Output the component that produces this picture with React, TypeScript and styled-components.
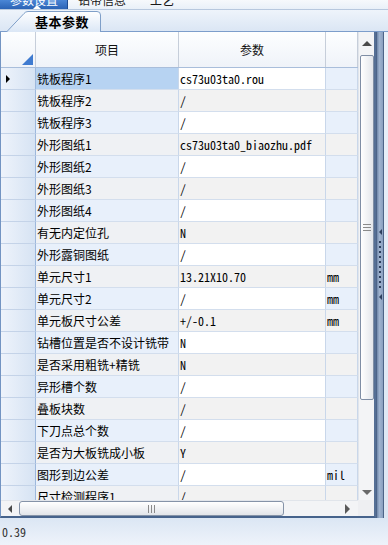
import React from "react";
import styled, { createGlobalStyle } from "styled-components";

const Global = createGlobalStyle`
  html, body { margin: 0; padding: 0; background: #ffffff; }
  body { font-family: "Noto Sans CJK SC", "Liberation Sans", sans-serif; }
  * { box-sizing: border-box; }
`;

const MONO = `"Noto Sans Mono CJK SC", "Liberation Mono", monospace`;

const Page = styled.div`
  width: 388px;
  height: 545px;
  display: flex;
  flex-direction: column;
  overflow: hidden;
  background: #e6eef8;
`;

/* ---------- top strip (cut-off outer tabs) ---------- */
const TopStrip = styled.div`
  height: 10px;
  display: flex;
  overflow: hidden;
  background: linear-gradient(#f6f9fc, #e9f0f8);
  border-bottom: 1px solid #b7c8de;
`;

const OuterTab = styled.div<{ $active?: boolean }>`
  position: relative;
  width: ${(p) => (p.$active ? "68px" : "auto")};
  padding-left: 10px;
  margin-right: ${(p) => (p.$active ? "0" : "14px")};
  background: ${(p) => (p.$active ? "linear-gradient(#4a86d6, #2b63b5)" : "transparent")};
  border-right: ${(p) => (p.$active ? "1px solid #1d4c92" : "none")};
  color: ${(p) => (p.$active ? "#ffffff" : "#1a1a1a")};
  font-size: 12px;
  line-height: 12px;
  white-space: nowrap;
`;

const OuterLabel = styled.span`
  display: block;
  margin-top: -6px;
`;

const Pointer = styled.span`
  position: absolute;
  left: 33px;
  bottom: 0;
  width: 0;
  height: 0;
  border-left: 4px solid transparent;
  border-right: 4px solid transparent;
  border-bottom: 4px solid #ffffff;
`;

/* ---------- tab bar ---------- */
const TabBar = styled.div`
  height: 22px;
  display: flex;
  align-items: flex-end;
  padding-left: 6px;
  background: linear-gradient(#eef4fb, #dbe6f4);
  border-bottom: 1px solid #7c9dcb;
`;

const Tab = styled.div`
  position: relative;
  width: 95px;
  height: 21px;
  display: flex;
  align-items: center;
  justify-content: flex-end;
  padding-right: 12px;
  font-size: 13px;
  font-weight: 700;
  color: #000;
  margin-bottom: -1px;
`;

const TabShape = styled.svg`
  position: absolute;
  inset: 0;
`;

const TabLabel = styled.span`
  position: relative;
  letter-spacing: 0.5px;
`;

/* ---------- main grid area ---------- */
const Main = styled.div`
  flex: 1;
  display: flex;
  min-height: 0;
`;

const GridFrame = styled.div`
  width: 376px;
  display: grid;
  grid-template-columns: 357px 16px;
  grid-template-rows: 1fr 16px;
  border-left: 1px solid #7394c2;
  border-right: 2px solid #556f95;
  border-bottom: 2px solid #46638c;
  background: #ffffff;
`;

const DataPane = styled.div`
  display: flex;
  flex-direction: column;
  overflow: hidden;
  min-height: 0;
`;

const COLS = "35px 143px 147px 32px";

const HeaderRow = styled.div`
  display: grid;
  grid-template-columns: ${COLS};
  height: 36px;
  flex: none;
  background: linear-gradient(#fdfeff, #eff3f9);
  border-bottom: 1px solid #a9bedb;
`;

const HeaderCell = styled.div`
  position: relative;
  display: flex;
  align-items: center;
  justify-content: center;
  border-right: 1px solid #c6ceda;
  font-size: 12px;
  color: #111;
`;

const CornerMark = styled.span`
  position: absolute;
  right: 2px;
  bottom: 2px;
  width: 0;
  height: 0;
  border-left: 11px solid transparent;
  border-bottom: 11px solid #3f7bd0;
`;

const Body = styled.div`
  flex: 1;
  overflow: hidden;
`;

const Row = styled.div`
  display: grid;
  grid-template-columns: ${COLS};
  height: 22px;
`;

const RowHead = styled.div`
  position: relative;
  display: flex;
  align-items: center;
  padding-left: 5px;
  background: linear-gradient(to right, #eef3fb, #d6e3f3);
  border-right: 1px solid #9db8dc;
  border-bottom: 1px solid #c4d3e8;
`;

const Indicator = styled.span`
  width: 0;
  height: 0;
  border-top: 4px solid transparent;
  border-bottom: 4px solid transparent;
  border-left: 4px solid #000;
`;

type Kind = "name" | "value" | "unit";

const bg = (kind: Kind, odd: boolean, selected: boolean) => {
  if (selected && kind === "name") return "#b7d3f2";
  if (odd) return kind === "name" ? "#eff1f4" : "#f2f2f2";
  return kind === "value" ? "#ffffff" : "#e8f0fb";
};

const Cell = styled.div<{ $kind: Kind; $odd: boolean; $sel?: boolean }>`
  display: flex;
  align-items: center;
  padding-left: 1px;
  overflow: hidden;
  white-space: nowrap;
  background: ${(p) => bg(p.$kind, p.$odd, !!p.$sel)};
  border-right: 1px solid #c9d7ea;
  border-bottom: 1px solid #d3deed;
  color: #000;
  font-family: ${(p) => (p.$kind === "name" ? `"Noto Sans CJK SC", "Liberation Sans", sans-serif` : MONO)};
  font-size: 12px;
`;

/* ---------- scrollbars ---------- */
const VScroll = styled.div`
  display: flex;
  flex-direction: column;
  align-items: center;
  background: #f3f4f6;
  border-left: 1px solid #e1e5eb;
`;

const ArrowBox = styled.div<{ $h: number }>`
  height: ${(p) => p.$h}px;
  width: 100%;
  flex: none;
  display: flex;
  align-items: center;
  justify-content: center;
`;

const TriUp = styled.span`
  width: 0;
  height: 0;
  border-left: 5px solid transparent;
  border-right: 5px solid transparent;
  border-bottom: 5px solid #4a4a4a;
`;

const TriDown = styled.span`
  width: 0;
  height: 0;
  border-left: 5px solid transparent;
  border-right: 5px solid transparent;
  border-top: 5px solid #6a6a6a;
`;

const TriLeft = styled.span`
  width: 0;
  height: 0;
  border-top: 4px solid transparent;
  border-bottom: 4px solid transparent;
  border-right: 4px solid #4a4a4a;
`;

const TriRight = styled.span`
  width: 0;
  height: 0;
  border-top: 5px solid transparent;
  border-bottom: 5px solid transparent;
  border-left: 5px solid #5a5a5a;
`;

const VThumb = styled.div`
  width: 14px;
  height: 345px;
  flex: none;
  display: flex;
  flex-direction: column;
  align-items: center;
  justify-content: center;
  gap: 2px;
  border: 1px solid #7f8ea5;
  border-radius: 2px;
  background: linear-gradient(to right, #ffffff, #e3e6eb);
`;

const Spacer = styled.div`
  flex: 1;
`;

const GripH = styled.span`
  width: 8px;
  height: 1px;
  background: #8a8a8a;
`;

const GripV = styled.span`
  width: 1px;
  height: 8px;
  background: #8a8a8a;
`;

const HScroll = styled.div`
  display: flex;
  align-items: center;
  background: #f3f4f6;
  border-top: 1px solid #e1e5eb;
`;

const HArrow = styled.div<{ $w: number }>`
  width: ${(p) => p.$w}px;
  height: 100%;
  flex: none;
  display: flex;
  align-items: center;
  justify-content: center;
`;

const HThumb = styled.div`
  width: 265px;
  height: 15px;
  flex: none;
  display: flex;
  align-items: center;
  justify-content: center;
  gap: 2px;
  border: 1px solid #8593a8;
  border-radius: 3px;
  background: linear-gradient(#ffffff, #e2e5ea);
`;

const ScrollCorner = styled.div`
  background: #eeeff2;
`;

/* ---------- splitter + side panel ---------- */
const Splitter = styled.div`
  width: 8px;
  display: flex;
  flex-direction: column;
  align-items: center;
  justify-content: center;
  gap: 3px;
  padding-bottom: 22px;
  background: linear-gradient(to right, #6f87aa, #9fb3cf 40%, #8aa0c0);
  border-left: 1px solid #4d6488;
  border-right: 1px solid #4d6488;
`;

const SplitTri = styled.span`
  width: 0;
  height: 0;
  border-top: 3px solid transparent;
  border-bottom: 3px solid transparent;
  border-right: 3px solid #2c3f5e;
  margin: 3px 0;
`;

const Dot = styled.span`
  width: 2px;
  height: 2px;
  background: #2c3f5e;
`;

const SidePanel = styled.div`
  flex: 1;
  background: linear-gradient(#eaf1fa, #dce6f3);
`;

/* ---------- status ---------- */
const Status = styled.div`
  height: 27px;
  flex: none;
  display: flex;
  align-items: center;
  padding-left: 2px;
  background: linear-gradient(#dbe6f4, #eef3fa);
  font-family: ${MONO};
  font-size: 12px;
  color: #333;
`;

const rows: [string, string, string][] = [
  ["铣板程序1", "cs73u03ta0.rou", ""],
  ["铣板程序2", "/", ""],
  ["铣板程序3", "/", ""],
  ["外形图纸1", "cs73u03ta0_biaozhu.pdf", ""],
  ["外形图纸2", "/", ""],
  ["外形图纸3", "/", ""],
  ["外形图纸4", "/", ""],
  ["有无内定位孔", "N", ""],
  ["外形露铜图纸", "/", ""],
  ["单元尺寸1", "13.21X10.70", "mm"],
  ["单元尺寸2", "/", "mm"],
  ["单元板尺寸公差", "+/-0.1", "mm"],
  ["钻槽位置是否不设计铣带", "N", ""],
  ["是否采用粗铣+精铣", "N", ""],
  ["异形槽个数", "/", ""],
  ["叠板块数", "/", ""],
  ["下刀点总个数", "/", ""],
  ["是否为大板铣成小板", "Y", ""],
  ["图形到边公差", "/", "mil"],
  ["尺寸检测程序1", "/", ""],
];

export default function App() {
  return (
    <Page>
      <Global />
      <TopStrip>
        <OuterTab $active>
          <OuterLabel>参数设置</OuterLabel>
          <Pointer />
        </OuterTab>
        <OuterTab>
          <OuterLabel>钻带信息</OuterLabel>
        </OuterTab>
        <OuterTab>
          <OuterLabel>工艺</OuterLabel>
        </OuterTab>
      </TopStrip>
      <TabBar>
        <Tab>
          <TabShape width="95" height="21" viewBox="0 0 95 21">
            <defs>
              <linearGradient id="tabg" x1="0" y1="0" x2="0" y2="1">
                <stop offset="0" stopColor="#ffffff" />
                <stop offset="1" stopColor="#dbe7f6" />
              </linearGradient>
            </defs>
            <path
              d="M0.5 21 L18 2.5 Q19.5 0.5 22 0.5 L91 0.5 Q94.5 0.5 94.5 4 L94.5 21"
              fill="url(#tabg)"
              stroke="#7f9fc8"
              strokeWidth="1"
            />
          </TabShape>
          <TabLabel>基本参数</TabLabel>
        </Tab>
      </TabBar>
      <Main>
        <GridFrame>
          <DataPane>
            <HeaderRow>
              <HeaderCell>
                <CornerMark />
              </HeaderCell>
              <HeaderCell>项目</HeaderCell>
              <HeaderCell>参数</HeaderCell>
              <HeaderCell />
            </HeaderRow>
            <Body>
              {rows.map(([name, value, unit], i) => {
                const odd = i % 2 === 1;
                return (
                  <Row key={i}>
                    <RowHead>{i === 0 && <Indicator />}</RowHead>
                    <Cell $kind="name" $odd={odd} $sel={i === 0}>
                      {name}
                    </Cell>
                    <Cell $kind="value" $odd={odd}>
                      {value}
                    </Cell>
                    <Cell $kind="unit" $odd={odd}>
                      {unit}
                    </Cell>
                  </Row>
                );
              })}
            </Body>
          </DataPane>
          <VScroll>
            <ArrowBox $h={23}>
              <TriUp />
            </ArrowBox>
            <VThumb>
              <GripH />
              <GripH />
              <GripH />
            </VThumb>
            <Spacer />
            <ArrowBox $h={16}>
              <TriDown />
            </ArrowBox>
          </VScroll>
          <HScroll>
            <HArrow $w={18}>
              <TriLeft />
            </HArrow>
            <HThumb>
              <GripV />
              <GripV />
              <GripV />
            </HThumb>
            <Spacer />
            <HArrow $w={22}>
              <TriRight />
            </HArrow>
          </HScroll>
          <ScrollCorner />
        </GridFrame>
        <Splitter>
          <SplitTri />
          {Array.from({ length: 10 }).map((_, i) => (
            <Dot key={i} />
          ))}
          <SplitTri />
        </Splitter>
        <SidePanel />
      </Main>
      <Status>0.39</Status>
    </Page>
  );
}
